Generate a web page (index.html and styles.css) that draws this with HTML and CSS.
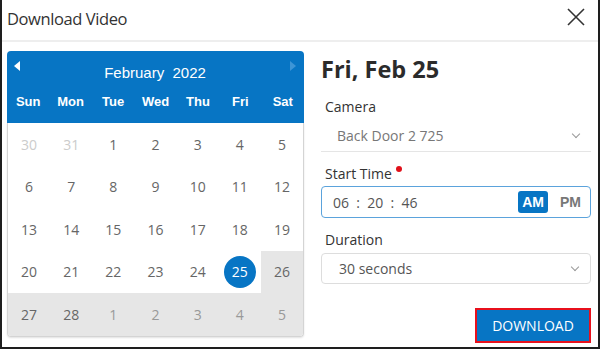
FILE: index.html
```html
<!DOCTYPE html>
<html lang="en">
<head>
    <meta charset="UTF-8">
    <meta name="viewport" content="width=device-width, initial-scale=1.0">
    <title>Download Video</title>
    <link rel="stylesheet" href="styles.css">
</head>
<body>
    <div class="dialog">
        <div class="dialog-header">
            <span class="dialog-title">Download Video</span>
            <svg class="close" width="20" height="20" viewBox="0 0 20 20">
                <path d="M2 2 L18 18 M18 2 L2 18" stroke="#333" stroke-width="1.6" fill="none"/>
            </svg>
        </div>
        <div class="dialog-body">
            <div class="calendar">
                <div class="cal-head">
                    <div class="cal-nav">
                        <span class="arrow arrow-left"></span>
                        <span class="cal-title">February&nbsp; 2022</span>
                        <span class="arrow arrow-right"></span>
                    </div>
                    <div class="weekdays">
                        <span>Sun</span><span>Mon</span><span>Tue</span><span>Wed</span><span>Thu</span><span>Fri</span><span>Sat</span>
                    </div>
                </div>
                <div class="cal-days">
                    <span class="other">30</span><span class="other">31</span><span>1</span><span>2</span><span>3</span><span>4</span><span>5</span>
                    <span>6</span><span>7</span><span>8</span><span>9</span><span>10</span><span>11</span><span>12</span>
                    <span>13</span><span>14</span><span>15</span><span>16</span><span>17</span><span>18</span><span>19</span>
                    <span>20</span><span>21</span><span>22</span><span>23</span><span>24</span><span class="selected"><b>25</b></span><span class="future">26</span>
                    <span class="future">27</span><span class="future">28</span><span class="future next">1</span><span class="future next">2</span><span class="future next">3</span><span class="future next">4</span><span class="future next">5</span>
                </div>
            </div>
            <div class="form">
                <h2 class="date-title">Fri, Feb 25</h2>
                <label class="field-label">Camera</label>
                <div class="select select-line">
                    <span>Back Door 2 725</span>
                    <span class="chevron"></span>
                </div>
                <label class="field-label">Start Time <i class="required"></i></label>
                <div class="time-input">
                    <span class="time-value">06 &nbsp;:&nbsp; 20 &nbsp;:&nbsp; 46</span>
                    <span class="ampm active">AM</span>
                    <span class="ampm">PM</span>
                </div>
                <label class="field-label">Duration</label>
                <div class="select select-box">
                    <span>30 seconds</span>
                    <span class="chevron"></span>
                </div>
                <div class="actions">
                    <button class="download">DOWNLOAD</button>
                </div>
            </div>
        </div>
    </div>
</body>
</html>
```

FILE: styles.css
```css
body {
    margin: 0;
    font-family: "Open Sans", Arial, sans-serif;
    background-color: #fff;
}
.dialog {
    width: 600px;
    height: 349px;
    box-sizing: border-box;
    border: 2px solid #1e1e1e;
    border-top: none;
    background-color: #fff;
}
.dialog-header {
    height: 40px;
    border-bottom: 2px solid #eee;
    display: flex;
    align-items: center;
    justify-content: space-between;
    padding: 0 12px 0 5px;
}
.dialog-title {
    font-size: 16.5px;
    letter-spacing: -0.4px;
    color: #333;
    margin-top: -4px;
}
.close {
    margin-top: -6px;
}
.dialog-body {
    display: flex;
    padding: 9px 0 0 5px;
}
.calendar {
    width: 297px;
}
.cal-head {
    background-color: #0775c4;
    border-radius: 4px 4px 0 0;
    height: 72px;
    color: #fff;
}
.cal-nav {
    height: 40px;
    display: flex;
    align-items: center;
    justify-content: space-between;
    padding: 0 8px 0 7px;
}
.cal-title {
    font-family: "Liberation Sans", Arial, sans-serif;
    font-size: 15px;
    margin-top: 2px;
}
.arrow {
    width: 0;
    height: 0;
    border-top: 5px solid transparent;
    border-bottom: 5px solid transparent;
    margin-top: -10px;
}
.arrow-left {
    border-right: 6px solid #fff;
}
.arrow-right {
    border-left: 6px solid #3d95d6;
}
.weekdays {
    display: grid;
    grid-template-columns: repeat(7, 1fr);
    font-family: "Liberation Sans", Arial, sans-serif;
    font-weight: bold;
    font-size: 13px;
    text-align: center;
    padding-top: 3px;
}
.cal-days {
    display: grid;
    grid-template-columns: repeat(7, 1fr);
    grid-auto-rows: 42.5px;
    border: 1px solid #d4d4d4;
    border-top: none;
    border-radius: 0 0 4px 4px;
    box-shadow: 0 1px 2px rgba(0,0,0,0.12);
    overflow: hidden;
    font-size: 14px;
    color: #666;
}
.cal-days span {
    display: flex;
    align-items: center;
    justify-content: center;
}
.cal-days .other {
    color: #ccc;
}
.cal-days .future {
    background-color: #e6e6e6;
}
.cal-days .next {
    color: #999;
}
.cal-days .selected b {
    width: 32px;
    height: 32px;
    border-radius: 50%;
    background-color: #0775c4;
    color: #fff;
    font-weight: normal;
    display: flex;
    align-items: center;
    justify-content: center;
}
.form {
    width: 270px;
    margin-left: 17px;
    color: #333;
}
.date-title {
    font-size: 23.5px;
    font-weight: bold;
    margin: 2px 0 0 0;
    color: #2b2b2b;
    line-height: 32px;
}
.field-label {
    display: block;
    font-size: 14px;
    margin: 12px 0 0 4px;
    line-height: 20px;
}
.required {
    display: inline-block;
    width: 6px;
    height: 6px;
    border-radius: 50%;
    background-color: #e0101a;
    vertical-align: top;
    margin-top: 2px;
}
.select {
    display: flex;
    align-items: center;
    justify-content: space-between;
    font-size: 14px;
    color: #777;
    box-sizing: border-box;
}
.select-line {
    height: 32px;
    padding: 0 12px 0 16px;
    border-bottom: 1px solid #e5e5e5;
    margin-top: 3px;
}
.select-box {
    height: 31px;
    margin-top: 3px;
    padding: 0 12px 0 17px;
    border: 1px solid #ddd;
    border-radius: 4px;
    color: #555;
}
.chevron {
    width: 5px;
    height: 5px;
    border-right: 1.5px solid #999;
    border-bottom: 1.5px solid #999;
    transform: rotate(45deg);
    margin-top: -4px;
}
.time-input {
    display: flex;
    align-items: center;
    height: 32px;
    box-sizing: border-box;
    border: 1px solid #5ba3dc;
    border-radius: 4px;
    padding: 0 5px 0 11px;
    margin-top: 2px;
    font-size: 14px;
    color: #555;
}
.time-value {
    flex: 1;
}
.ampm {
    font-family: "Liberation Sans", Arial, sans-serif;
    font-weight: bold;
    font-size: 14px;
    color: #777;
    padding: 3px 4px;
    margin-left: 8px;
    border-radius: 3px;
}
.ampm.active {
    background-color: #0775c4;
    color: #fff;
}
.actions {
    display: flex;
    justify-content: flex-end;
    margin-top: 24px;
}
.download {
    font-family: "Open Sans", Arial, sans-serif;
    background-color: #0775c4;
    border: 2px solid #e8101c;
    color: #fff;
    font-size: 14px;
    width: 116px;
    height: 35px;
    cursor: pointer;
}
```
